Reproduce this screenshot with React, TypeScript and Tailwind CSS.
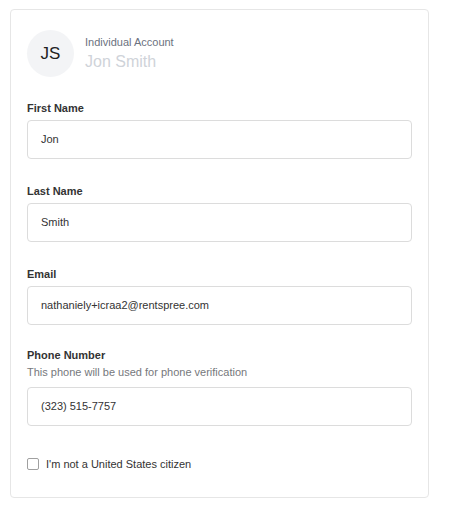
import React from "react";

const fields = [
  { label: "First Name", value: "Jon" },
  { label: "Last Name", value: "Smith" },
  { label: "Email", value: "nathaniely+icraa2@rentspree.com" },
];

function Field({
  label,
  value,
  hint,
  spacing,
}: {
  label: string;
  value: string;
  hint?: string;
  spacing: string;
}) {
  return (
    <div className={`flex flex-col ${spacing}`}>
      <label className="text-[11px] leading-[14px] font-bold text-[#333333]">
        {label}
      </label>
      {hint && (
        <span className="mt-[2px] text-[11px] leading-[16px] text-[#76787c]">
          {hint}
        </span>
      )}
      <div
        className={`${hint ? "mt-[7px]" : "mt-[5px]"} h-[39px] flex items-center px-[13px] border border-[#dcdcdc] rounded-[4px] bg-white`}
      >
        <span className="text-[11px] text-[#333333]">{value}</span>
      </div>
    </div>
  );
}

export default function App() {
  return (
    <div
      className="min-h-screen bg-white pt-[9px] pl-[10px]"
      style={{ fontFamily: '"Liberation Sans", Arial, sans-serif' }}
    >
      <div className="w-[419px] border border-[#e6e6e6] rounded-[4px] px-[16px] pt-[20px] pb-[26px]">
        {/* Header */}
        <div className="flex items-center gap-[11px]">
          <div className="w-[47px] h-[47px] rounded-full bg-[#f3f4f6] flex items-center justify-center text-[17px] text-[#222222]">
            JS
          </div>
          <div className="flex flex-col -mt-[1px]">
            <span className="text-[11px] leading-[14px] text-[#6b7280]">
              Individual Account
            </span>
            <span className="mt-[3px] text-[16px] leading-[20px] text-[#cfd3d9]">
              Jon Smith
            </span>
          </div>
        </div>

        {fields.map((f, i) => (
          <Field
            key={f.label}
            label={f.label}
            value={f.value}
            spacing={i === 0 ? "mt-[24px]" : "mt-[25px]"}
          />
        ))}
        <Field
          label="Phone Number"
          value="(323) 515-7757"
          hint="This phone will be used for phone verification"
          spacing="mt-[23px]"
        />

        {/* Citizenship */}
        <label className="mt-[31px] flex items-center gap-[7px]">
          <span className="w-[12px] h-[12px] border border-[#a0a0a0] rounded-[2px] bg-white" />
          <span className="text-[11px] leading-[14px] text-[#333333]">
            I'm not a United States citizen
          </span>
        </label>
      </div>
    </div>
  );
}
